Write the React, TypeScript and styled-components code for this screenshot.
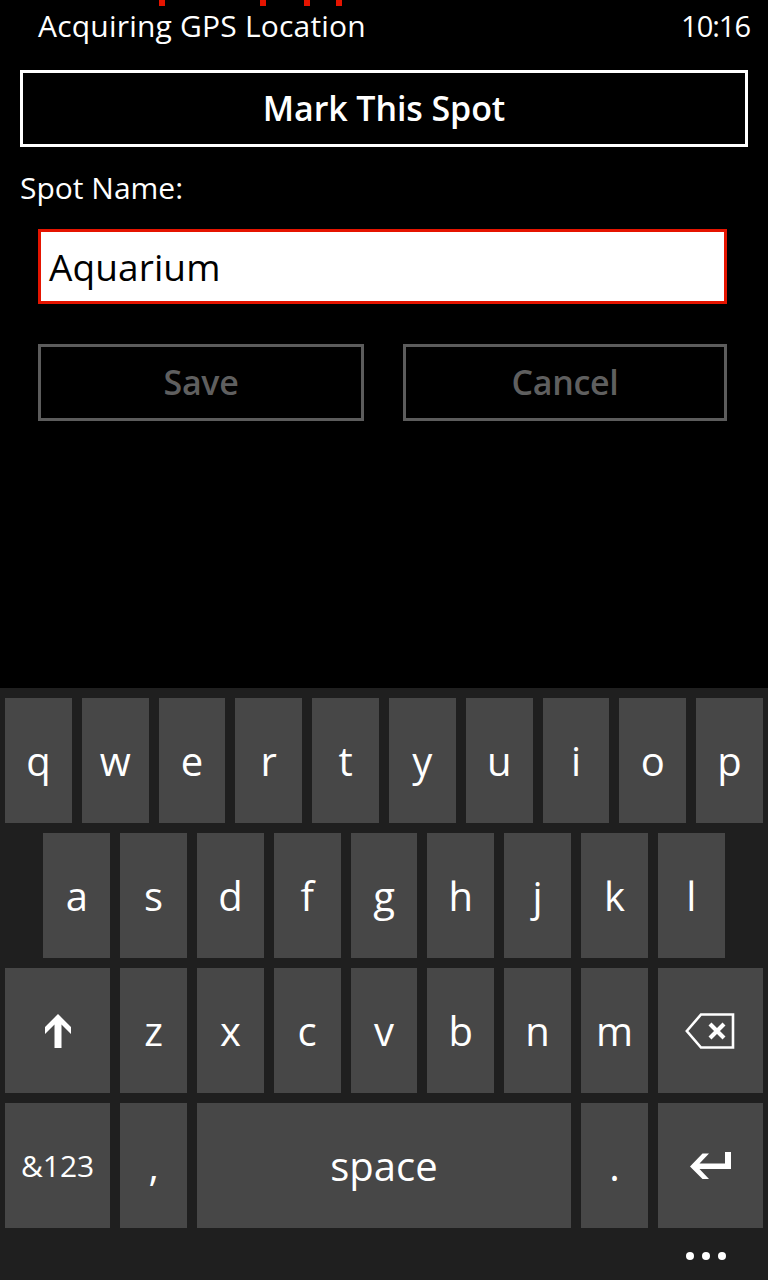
import React from "react";
import styled, { createGlobalStyle } from "styled-components";

const Global = createGlobalStyle`
  html, body { margin: 0; padding: 0; background: #000; }
  * { box-sizing: border-box; }
`;

const Screen = styled.div`
  position: relative;
  width: 768px;
  height: 1280px;
  background: #000;
  display: flex;
  flex-direction: column;
  font-family: "Open Sans", "Noto Sans", sans-serif;
  color: #fff;
  overflow: hidden;
`;

const Progress = styled.div`
  position: absolute;
  top: 0;
  left: 0;
  width: 100%;
  height: 6px;
`;

const Dot = styled.span<{ $x: number }>`
  position: absolute;
  top: 0;
  left: ${(p) => p.$x}px;
  width: 6px;
  height: 6px;
  background: #e51400;
`;

const StatusBar = styled.div`
  height: 56px;
  display: flex;
  align-items: center;
  justify-content: space-between;
  padding: 0 18px 6px 38px;
  font-size: 30px;
  font-weight: 400;
  letter-spacing: 0.2px;
`;

const Clock = styled.span`
  font-size: 29px;
  letter-spacing: -1px;
`;

const Content = styled.div`
  display: flex;
  flex-direction: column;
  padding: 14px 20px 0 20px;
`;

const MarkButton = styled.button`
  height: 77px;
  border: 3px solid #fff;
  background: #000;
  color: #fff;
  font-family: "Open Sans", "Noto Sans", sans-serif;
  font-size: 34px;
  font-weight: 600;
  letter-spacing: -0.1px;
  padding: 0 0 2px;
`;

const Label = styled.div`
  margin-top: 22px;
  font-size: 30px;
  line-height: 38px;
  letter-spacing: 0;
`;

const Form = styled.div`
  display: flex;
  flex-direction: column;
  padding: 0 21px 0 18px;
`;

const TextBox = styled.div`
  margin-top: 22px;
  height: 75px;
  border: 3px solid #e51400;
  background: #fff;
  color: #000;
  font-size: 37px;
  display: flex;
  align-items: center;
  padding: 0 0 0 8px;
  letter-spacing: 0.1px;
`;

const ButtonRow = styled.div`
  margin-top: 40px;
  display: grid;
  grid-template-columns: 326px 324px;
  justify-content: space-between;
`;

const DimButton = styled.button`
  height: 77px;
  border: 3px solid #5c5c5c;
  background: #000;
  color: #5f5f5f;
  font-family: "Open Sans", "Noto Sans", sans-serif;
  font-size: 34px;
  font-weight: 600;
  letter-spacing: -0.3px;
  padding: 0 0 2px;
`;

const Keyboard = styled.div`
  margin-top: auto;
  height: 592px;
  background: #1f1f1f;
  display: flex;
  flex-direction: column;
  padding: 10px 5px 0;
`;

const Rows = styled.div`
  display: flex;
  flex-direction: column;
  gap: 10px;
`;

const Row = styled.div`
  display: grid;
  grid-template-columns: repeat(20, 1fr);
  column-gap: 10px;
  height: 125px;
`;

const Key = styled.div<{ $span: number; $start?: number; $size?: number }>`
  grid-column: ${(p) => (p.$start ? `${p.$start} / span ${p.$span}` : `span ${p.$span}`)};
  background: #474747;
  color: #fff;
  display: flex;
  align-items: center;
  justify-content: center;
  font-size: ${(p) => p.$size ?? 40}px;
  font-weight: 400;
  line-height: 1;
`;

const Footer = styled.div`
  flex: 1;
  display: flex;
  justify-content: flex-end;
  align-items: center;
  gap: 8px;
  padding: 4px 37px 0 0;
`;

const MoreDot = styled.span`
  width: 8px;
  height: 8px;
  border-radius: 50%;
  background: #fff;
`;

const ShiftIcon = () => (
  <svg width="26" height="34" viewBox="0 0 26 34">
    <path d="M13 0 L26 13 L26 20 L16.5 10.5 L16.5 34 L9.5 34 L9.5 10.5 L0 20 L0 13 Z" fill="#fff" />
  </svg>
);

const BackIcon = () => (
  <svg width="50" height="36" viewBox="0 0 50 36">
    <path d="M1.8 18 L16 1.5 L48 1.5 L48 34.5 L16 34.5 Z" fill="none" stroke="#fff" strokeWidth="2.6" strokeLinejoin="miter" />
    <path d="M25 11 L39 25 M39 11 L25 25" stroke="#fff" strokeWidth="4.2" />
  </svg>
);

const EnterIcon = () => (
  <svg width="41" height="28" viewBox="0 0 41 28">
    <path d="M0 14.5 L12.5 1.5 L19 1.5 L9.5 11.5 L35 11.5 L35 0 L41 0 L41 17 L9.5 17 L19 27 L12.5 27 Z" fill="#fff" />
  </svg>
);

const row1 = ["q", "w", "e", "r", "t", "y", "u", "i", "o", "p"];
const row2 = ["a", "s", "d", "f", "g", "h", "j", "k", "l"];
const row3 = ["z", "x", "c", "v", "b", "n", "m"];

export default function App() {
  return (
    <Screen>
      <Global />
      <Progress>
        {[159, 260, 304, 336].map((x) => (
          <Dot key={x} $x={x} />
        ))}
      </Progress>
      <StatusBar>
        <span>Acquiring GPS Location</span>
        <Clock>10:16</Clock>
      </StatusBar>
      <Content>
        <MarkButton>Mark This Spot</MarkButton>
        <Label>Spot Name:</Label>
        <Form>
          <TextBox>Aquarium</TextBox>
          <ButtonRow>
            <DimButton>Save</DimButton>
            <DimButton>Cancel</DimButton>
          </ButtonRow>
        </Form>
      </Content>
      <Keyboard>
        <Rows>
          <Row>
            {row1.map((k) => (
              <Key key={k} $span={2}>{k}</Key>
            ))}
          </Row>
          <Row>
            {row2.map((k, i) => (
              <Key key={k} $span={2} $start={i === 0 ? 2 : undefined}>{k}</Key>
            ))}
          </Row>
          <Row>
            <Key $span={3}><ShiftIcon /></Key>
            {row3.map((k) => (
              <Key key={k} $span={2}>{k}</Key>
            ))}
            <Key $span={3}><BackIcon /></Key>
          </Row>
          <Row>
            <Key $span={3} $size={30}>&amp;123</Key>
            <Key $span={2}>,</Key>
            <Key $span={10} $size={40}>space</Key>
            <Key $span={2}>.</Key>
            <Key $span={3}><EnterIcon /></Key>
          </Row>
        </Rows>
        <Footer>
          <MoreDot />
          <MoreDot />
          <MoreDot />
        </Footer>
      </Keyboard>
    </Screen>
  );
}
